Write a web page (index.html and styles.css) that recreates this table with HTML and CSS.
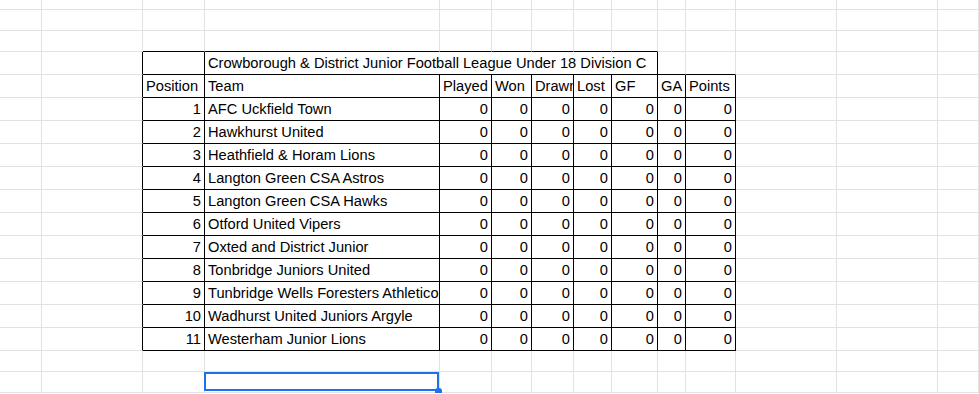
FILE: index.html
```html
<!DOCTYPE html>
<html lang="en">
<head>
<meta charset="utf-8">
<title>Crowborough &amp; District Junior Football League Under 18 Division C</title>
<link rel="stylesheet" href="styles.css">
</head>
<body>
<table class="sheet">
  <colgroup>
    <col class="w42"><col class="w101"><col class="w62"><col class="w235"><col class="w52"><col class="w40"><col class="w42"><col class="w38"><col class="w46"><col class="w28"><col class="w50"><col class="w101"><col class="w101"><col class="w41">
  </colgroup>
  <tr class="h10"><td></td><td></td><td></td><td></td><td></td><td></td><td></td><td></td><td></td><td></td><td></td><td></td><td></td><td></td></tr>
  <tr class="h21"><td></td><td></td><td></td><td></td><td></td><td></td><td></td><td></td><td></td><td></td><td></td><td></td><td></td><td></td></tr>
  <tr class="h21"><td></td><td></td><td class="bb"></td><td class="bb"></td><td class="bb"></td><td class="bb"></td><td class="bb"></td><td class="bb"></td><td class="bb"></td><td></td><td></td><td></td><td></td><td></td></tr>
  <tr class="h23"><td></td><td class="br"></td><td class="bx"></td><td class="bx" colspan="6">Crowborough &amp; District Junior Football League Under 18 Division C</td><td class="bb"></td><td class="bb"></td><td></td><td></td><td></td></tr>
  <tr class="h23"><td></td><td class="br"></td><td class="bx">Position</td><td class="bx">Team</td><td class="bx">Played</td><td class="bx">Won</td><td class="bx">Drawn</td><td class="bx">Lost</td><td class="bx">GF</td><td class="bx">GA</td><td class="bx">Points</td><td></td><td></td><td></td></tr>
  <tr class="h23"><td></td><td class="br"></td><td class="bx n">1</td><td class="bx">AFC Uckfield Town</td><td class="bx n">0</td><td class="bx n">0</td><td class="bx n">0</td><td class="bx n">0</td><td class="bx n">0</td><td class="bx n">0</td><td class="bx n">0</td><td></td><td></td><td></td></tr>
  <tr class="h23"><td></td><td class="br"></td><td class="bx n">2</td><td class="bx">Hawkhurst United</td><td class="bx n">0</td><td class="bx n">0</td><td class="bx n">0</td><td class="bx n">0</td><td class="bx n">0</td><td class="bx n">0</td><td class="bx n">0</td><td></td><td></td><td></td></tr>
  <tr class="h23"><td></td><td class="br"></td><td class="bx n">3</td><td class="bx">Heathfield &amp; Horam Lions</td><td class="bx n">0</td><td class="bx n">0</td><td class="bx n">0</td><td class="bx n">0</td><td class="bx n">0</td><td class="bx n">0</td><td class="bx n">0</td><td></td><td></td><td></td></tr>
  <tr class="h23"><td></td><td class="br"></td><td class="bx n">4</td><td class="bx">Langton Green CSA Astros</td><td class="bx n">0</td><td class="bx n">0</td><td class="bx n">0</td><td class="bx n">0</td><td class="bx n">0</td><td class="bx n">0</td><td class="bx n">0</td><td></td><td></td><td></td></tr>
  <tr class="h23"><td></td><td class="br"></td><td class="bx n">5</td><td class="bx">Langton Green CSA Hawks</td><td class="bx n">0</td><td class="bx n">0</td><td class="bx n">0</td><td class="bx n">0</td><td class="bx n">0</td><td class="bx n">0</td><td class="bx n">0</td><td></td><td></td><td></td></tr>
  <tr class="h23"><td></td><td class="br"></td><td class="bx n">6</td><td class="bx">Otford United Vipers</td><td class="bx n">0</td><td class="bx n">0</td><td class="bx n">0</td><td class="bx n">0</td><td class="bx n">0</td><td class="bx n">0</td><td class="bx n">0</td><td></td><td></td><td></td></tr>
  <tr class="h23"><td></td><td class="br"></td><td class="bx n">7</td><td class="bx">Oxted and District Junior</td><td class="bx n">0</td><td class="bx n">0</td><td class="bx n">0</td><td class="bx n">0</td><td class="bx n">0</td><td class="bx n">0</td><td class="bx n">0</td><td></td><td></td><td></td></tr>
  <tr class="h23"><td></td><td class="br"></td><td class="bx n">8</td><td class="bx">Tonbridge Juniors United</td><td class="bx n">0</td><td class="bx n">0</td><td class="bx n">0</td><td class="bx n">0</td><td class="bx n">0</td><td class="bx n">0</td><td class="bx n">0</td><td></td><td></td><td></td></tr>
  <tr class="h23"><td></td><td class="br"></td><td class="bx n">9</td><td class="bx">Tunbridge Wells Foresters Athletico</td><td class="bx n">0</td><td class="bx n">0</td><td class="bx n">0</td><td class="bx n">0</td><td class="bx n">0</td><td class="bx n">0</td><td class="bx n">0</td><td></td><td></td><td></td></tr>
  <tr class="h23"><td></td><td class="br"></td><td class="bx n">10</td><td class="bx">Wadhurst United Juniors Argyle</td><td class="bx n">0</td><td class="bx n">0</td><td class="bx n">0</td><td class="bx n">0</td><td class="bx n">0</td><td class="bx n">0</td><td class="bx n">0</td><td></td><td></td><td></td></tr>
  <tr class="h23"><td></td><td class="br"></td><td class="bx n">11</td><td class="bx">Westerham Junior Lions</td><td class="bx n">0</td><td class="bx n">0</td><td class="bx n">0</td><td class="bx n">0</td><td class="bx n">0</td><td class="bx n">0</td><td class="bx n">0</td><td></td><td></td><td></td></tr>
  <tr class="h21"><td></td><td></td><td></td><td></td><td></td><td></td><td></td><td></td><td></td><td></td><td></td><td></td><td></td><td></td></tr>
  <tr class="h21"><td></td><td></td><td></td><td class="sel"><span class="selbox"><span class="handle"></span></span></td><td></td><td></td><td></td><td></td><td></td><td></td><td></td><td></td><td></td><td></td></tr>
</table>
</body>
</html>
```

FILE: styles.css
```css
html, body {
  margin: 0;
  padding: 0;
  background: #fff;
  overflow: hidden;
}

.sheet {
  table-layout: fixed;
  border-collapse: separate;
  border-spacing: 0;
  width: 979px;
  font-family: "Liberation Sans", Arial, sans-serif;
  font-size: 14.67px;
  color: #000;
}

.w28 { width: 28px; }
.w38 { width: 38px; }
.w40 { width: 40px; }
.w41 { width: 41px; }
.w42 { width: 42px; }
.w46 { width: 46px; }
.w50 { width: 50px; }
.w52 { width: 52px; }
.w62 { width: 62px; }
.w101 { width: 101px; }
.w235 { width: 235px; }

.h10 { height: 10px; }
.h21 { height: 21px; }
.h23 { height: 23px; }

.sheet td {
  box-sizing: border-box;
  padding: 0 3px 2px 3px;
  line-height: 17px;
  vertical-align: bottom;
  white-space: nowrap;
  overflow: hidden;
  border-right: 1px solid #e2e2e2;
  border-bottom: 1px solid #e2e2e2;
}

.sheet td.br { border-right-color: #000; }
.sheet td.bb { border-bottom-color: #000; }
.sheet td.bx { border-right-color: #000; border-bottom-color: #000; }
.sheet td.n { text-align: right; }

.sheet td.sel {
  position: relative;
  overflow: visible;
}

.selbox {
  position: absolute;
  left: -1px;
  top: 0;
  right: 0;
  bottom: 1px;
  border: 2px solid #1a73e8;
}

.handle {
  position: absolute;
  right: -5px;
  bottom: -6px;
  width: 7px;
  height: 7px;
  border-radius: 3px;
  background: #1a73e8;
}
```
